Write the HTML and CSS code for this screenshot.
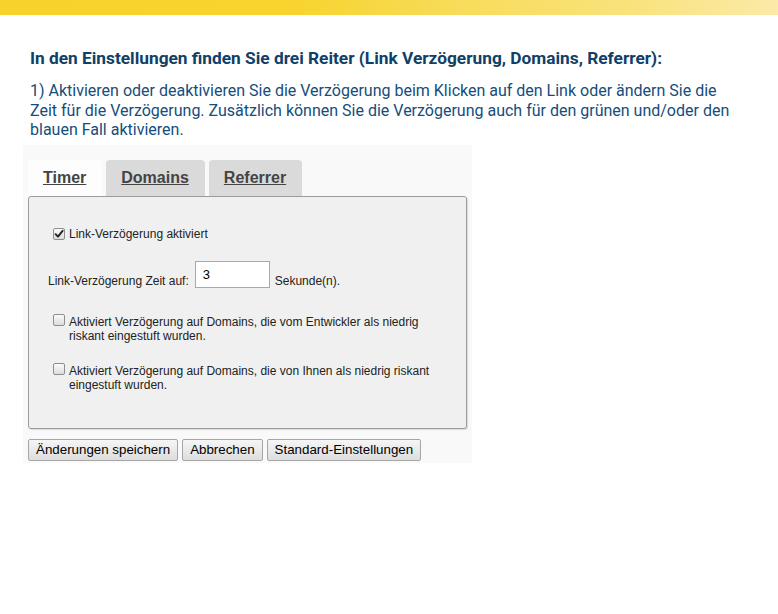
FILE: index.html
```html
<!DOCTYPE html>
<html lang="de">
<head>
<meta charset="utf-8">
<title>Einstellungen</title>
<link rel="stylesheet" href="styles.css">
</head>
<body>
<div class="topbar"></div>
<main class="content">
  <h1 class="title">In den Einstellungen finden Sie drei Reiter (Link Verzögerung, Domains, Referrer):</h1>
  <p class="intro">1) Aktivieren oder deaktivieren Sie die Verzögerung beim Klicken auf den Link oder ändern Sie die Zeit für die Verzögerung. Zusätzlich können Sie die Verzögerung auch für den grünen und/oder den blauen Fall aktivieren.</p>
  <div class="shot">
    <div class="tabs">
      <span class="tab tab-active">Timer</span>
      <span class="tab">Domains</span>
      <span class="tab">Referrer</span>
    </div>
    <div class="panel">
      <div class="check-row row-first">
        <span class="cb cb-checked"><svg viewBox="0 0 12 12" width="12" height="12"><path d="M2.6 6.2 L5 8.6 L9.6 2.8" fill="none" stroke="#222" stroke-width="1.9" stroke-linecap="round" stroke-linejoin="round"/></svg></span>
        <span class="check-label">Link-Verzögerung aktiviert</span>
      </div>
      <div class="time-row">
        <span class="time-label">Link-Verzögerung Zeit auf:</span>
        <span class="num-input">3</span>
        <span class="time-label">Sekunde(n).</span>
      </div>
      <div class="check-row row-dev">
        <span class="cb"></span>
        <span class="check-label">Aktiviert Verzögerung auf Domains, die vom Entwickler als niedrig riskant eingestuft wurden.</span>
      </div>
      <div class="check-row row-own">
        <span class="cb"></span>
        <span class="check-label">Aktiviert Verzögerung auf Domains, die von Ihnen als niedrig riskant eingestuft wurden.</span>
      </div>
    </div>
    <div class="buttons">
      <span class="btn">Änderungen speichern</span>
      <span class="btn">Abbrechen</span>
      <span class="btn">Standard-Einstellungen</span>
    </div>
  </div>
</main>
</body>
</html>
```

FILE: styles.css
```css
html, body {
  margin: 0;
  padding: 0;
  background: #ffffff;
}

.topbar {
  height: 15px;
  background: linear-gradient(to right, #f7d22c 0%, #f7d42f 38%, #f8dc5c 60%, #f9e27a 80%, #fbeaa8 100%);
}

.content {
  padding: 0 0 0 23px;
  width: 722px;
}

.title {
  margin: 32px 0 0 7px;
  font-family: Roboto, "Liberation Sans", sans-serif;
  font-weight: 700;
  font-size: 17.3px;
  line-height: 22px;
  color: #0f4068;
}

.intro {
  margin: 12px 0 0 7px;
  font-family: Roboto, "Liberation Sans", sans-serif;
  font-size: 16px;
  line-height: 19.6px;
  color: #154d7c;
}

.shot {
  margin-top: 5px;
  width: 449px;
  height: 318px;
  box-sizing: border-box;
  padding: 15px 0 0 5px;
  background: #f9f9f9;
  font-family: "Liberation Sans", Arial, sans-serif;
}

.tabs {
  display: flex;
  gap: 4px;
  height: 36px;
}

.tab {
  box-sizing: border-box;
  height: 36px;
  padding: 9px 16px 0 15px;
  font-size: 16px;
  line-height: 18px;
  font-weight: 700;
  color: #444444;
  text-decoration: underline;
  background: #dadada;
  border-radius: 4px 4px 0 0;
}

.tab-active {
  background: #fdfdfd;
}

.panel {
  width: 439px;
  height: 233px;
  box-sizing: border-box;
  border: 1px solid #9c9c9c;
  border-radius: 3px;
  background: #f0f0f0;
  box-shadow: 1px 1px 1px rgba(0, 0, 0, 0.12);
  padding: 30px 20px 0 19px;
}

.check-row {
  display: flex;
  align-items: flex-start;
  gap: 4px;
  margin-left: 5px;
  font-size: 12px;
  line-height: 14px;
  color: #222222;
}

.cb {
  flex: none;
  width: 12px;
  height: 12px;
  box-sizing: border-box;
  margin-top: 1px;
  border: 1px solid #8e8e8e;
  border-radius: 2px;
  background: linear-gradient(#fbfbfb, #dcdcdc);
  display: flex;
  align-items: center;
  justify-content: center;
}

.cb svg {
  display: block;
  flex: none;
}

.row-dev .cb,
.row-own .cb {
  margin-top: -1px;
}

.time-row {
  display: flex;
  align-items: flex-end;
  margin-top: 20px;
  font-size: 12px;
  line-height: 14px;
  color: #222222;
}

.num-input {
  width: 75px;
  height: 27px;
  box-sizing: border-box;
  margin: 0 5px 0 6px;
  padding: 5px 7px 0;
  border: 1px solid #a9a9a9;
  background: #ffffff;
  font-size: 13px;
  line-height: 15px;
  color: #000000;
}

.row-dev {
  margin-top: 27px;
}

.row-own {
  margin-top: 21px;
}

.buttons {
  display: flex;
  gap: 4px;
  margin-top: 10px;
}

.btn {
  box-sizing: border-box;
  height: 22px;
  padding: 0 7px;
  border: 1px solid #a6a6a6;
  border-radius: 2px;
  background: linear-gradient(#f6f6f6, #dddddd);
  font-size: 13.333px;
  line-height: 20px;
  color: #000000;
}
```
